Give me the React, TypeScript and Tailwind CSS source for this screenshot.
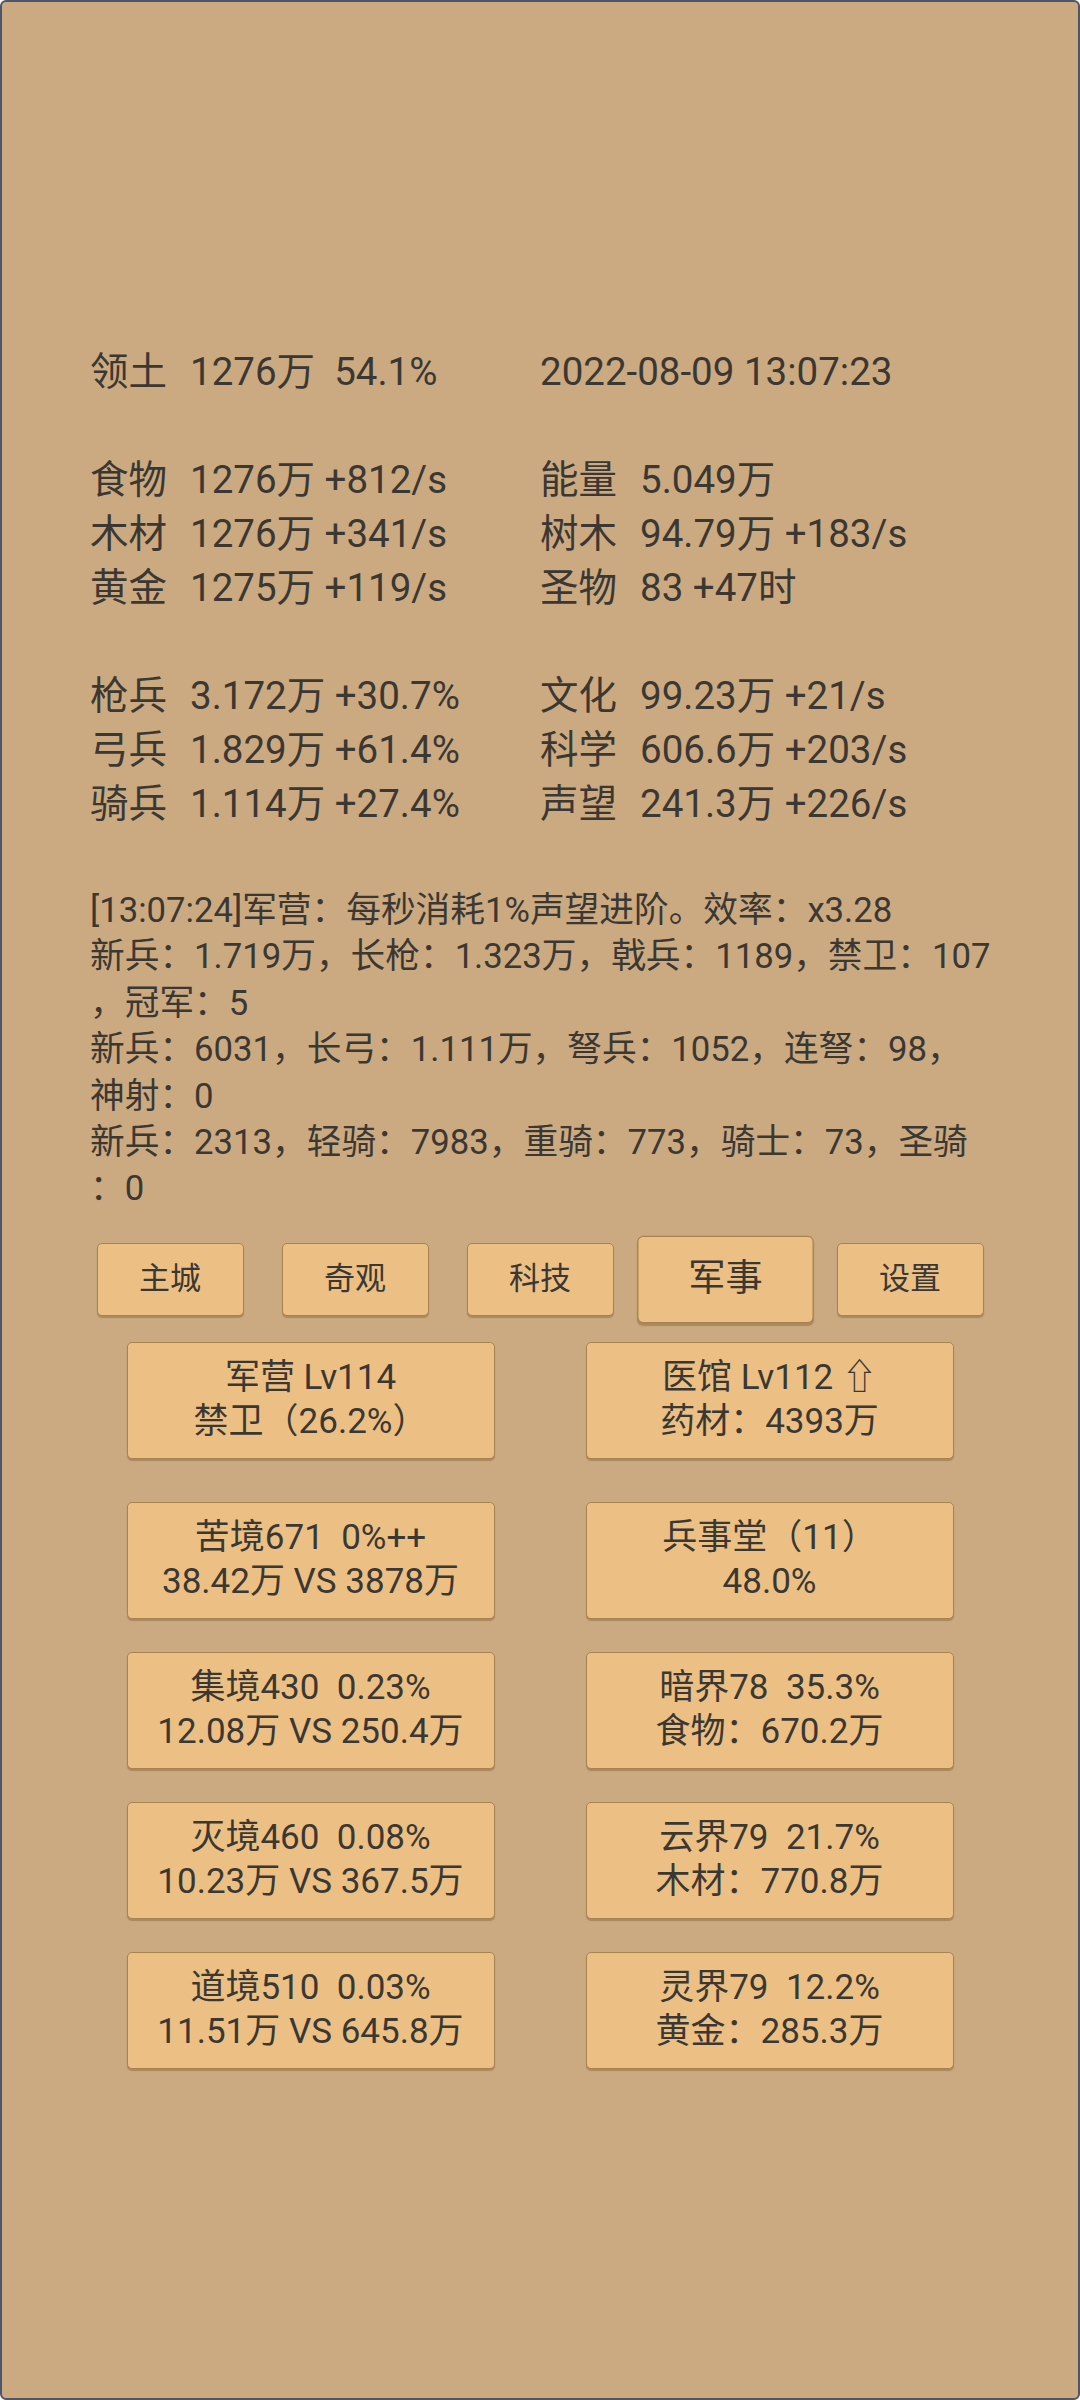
const FONT = { fontFamily: 'Roboto, "Noto Sans CJK SC", sans-serif' };

const stats: [string, string][][] = [
  [["领土", "1276万  54.1%"], ["", "2022-08-09 13:07:23"]],
  [
    ["食物", "1276万 +812/s"],
    ["能量", "5.049万"],
    ["木材", "1276万 +341/s"],
    ["树木", "94.79万 +183/s"],
    ["黄金", "1275万 +119/s"],
    ["圣物", "83 +47时"],
  ],
  [
    ["枪兵", "3.172万 +30.7%"],
    ["文化", "99.23万 +21/s"],
    ["弓兵", "1.829万 +61.4%"],
    ["科学", "606.6万 +203/s"],
    ["骑兵", "1.114万 +27.4%"],
    ["声望", "241.3万 +226/s"],
  ],
];

const logLines = [
  "[13:07:24]军营：每秒消耗1%声望进阶。效率：x3.28",
  "新兵：1.719万，长枪：1.323万，戟兵：1189，禁卫：107",
  "，冠军：5",
  "新兵：6031，长弓：1.111万，弩兵：1052，连弩：98，",
  "神射：0",
  "新兵：2313，轻骑：7983，重骑：773，骑士：73，圣骑",
  "：0",
];

const tabs = ["主城", "奇观", "科技", "军事", "设置"];

const cards: [string, string][] = [
  ["苦境671  0%++", "38.42万 VS 3878万"],
  ["兵事堂（11）", "48.0%"],
  ["集境430  0.23%", "12.08万 VS 250.4万"],
  ["暗界78  35.3%", "食物：670.2万"],
  ["灭境460  0.08%", "10.23万 VS 367.5万"],
  ["云界79  21.7%", "木材：770.8万"],
  ["道境510  0.03%", "11.51万 VS 645.8万"],
  ["灵界79  12.2%", "黄金：285.3万"],
];

function Card({ top, bottom }: { top: string; bottom: string }) {
  return (
    <div className="h-[117px] flex flex-col items-center justify-center rounded-[5px] border-[1.5px] border-[#a8834f] bg-[#ecc084] shadow-[0_2px_1px_rgba(110,75,35,0.35)] text-[35px] leading-[44px] whitespace-pre">
      <div>{top}</div>
      <div>{bottom}</div>
    </div>
  );
}

export default function App() {
  return (
    <div
      style={FONT}
      className="w-[1080px] h-[2400px] overflow-hidden rounded-[6px] border-2 border-[#4f5569] bg-[#cbaa81] text-[#3b3833] px-[88px] pt-[343px]"
    >
      {/* resource stats */}
      <div className="text-[38.5px] leading-[54px] whitespace-pre">
        {stats.map((group, gi) => (
          <div key={gi} className={`grid grid-cols-[450px_450px] ${gi > 0 ? "mt-[54px]" : ""}`}>
            {group.map(([label, value], i) => (
              <div key={i}>
                {label && <span className="inline-block w-[100px]">{label}</span>}
                <span>{value}</span>
              </div>
            ))}
          </div>
        ))}
      </div>

      {/* log */}
      <div className="mt-[56px] text-[34.7px] leading-[46.4px] whitespace-pre">
        {logLines.map((l, i) => (
          <div key={i}>{l}</div>
        ))}
      </div>

      {/* tabs */}
      <div className="mt-[31px] flex justify-center gap-[38px]">
        {tabs.map((t) => (
          <div
            key={t}
            className={`w-[147px] h-[73px] flex items-center justify-center rounded-[5px] border-[1.5px] border-[#a8834f] bg-[#ecc084] shadow-[0_2px_1px_rgba(110,75,35,0.35)] text-[31px] ${
              t === "军事" ? "scale-[1.2]" : ""
            }`}
          >
            {t}
          </div>
        ))}
      </div>

      {/* buildings */}
      <div className="mt-[26px] grid grid-cols-[368px_368px] justify-center gap-x-[91px]">
        <Card top="军营 Lv114" bottom="禁卫（26.2%）" />
        <Card top="医馆 Lv112 ⇧" bottom="药材：4393万" />
      </div>

      <div className="mt-[43px] grid grid-cols-[368px_368px] justify-center gap-x-[91px] gap-y-[33px]">
        {cards.map(([a, b], i) => (
          <Card key={i} top={a} bottom={b} />
        ))}
      </div>
    </div>
  );
}
